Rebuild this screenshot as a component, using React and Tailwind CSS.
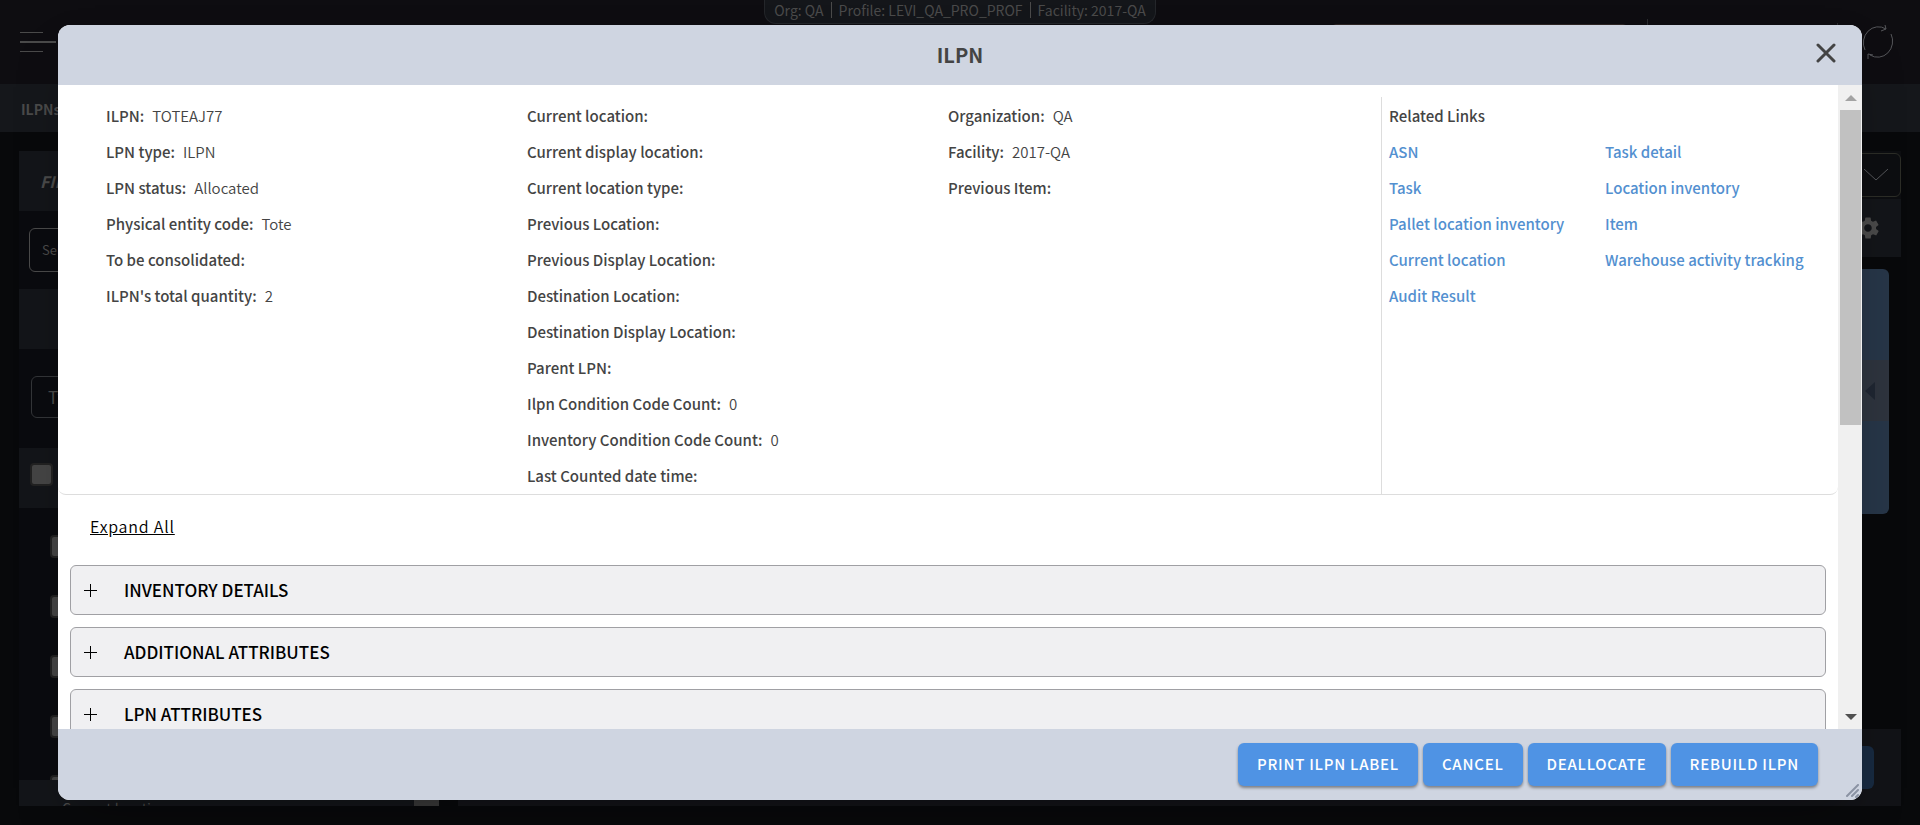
import React from "react";
import { IoMdSettings } from "react-icons/io";

const columns = [
  [
    ["ILPN:", "TOTEAJ77"],
    ["LPN type:", "ILPN"],
    ["LPN status:", "Allocated"],
    ["Physical entity code:", "Tote"],
    ["To be consolidated:", ""],
    ["ILPN's total quantity:", "2"],
  ],
  [
    ["Current location:", ""],
    ["Current display location:", ""],
    ["Current location type:", ""],
    ["Previous Location:", ""],
    ["Previous Display Location:", ""],
    ["Destination Location:", ""],
    ["Destination Display Location:", ""],
    ["Parent LPN:", ""],
    ["Ilpn Condition Code Count:", "0"],
    ["Inventory Condition Code Count:", "0"],
    ["Last Counted date time:", ""],
  ],
  [
    ["Organization:", "QA"],
    ["Facility:", "2017-QA"],
    ["Previous Item:", ""],
  ],
];

const links = [
  "ASN",
  "Task detail",
  "Task",
  "Location inventory",
  "Pallet location inventory",
  "Item",
  "Current location",
  "Warehouse activity tracking",
  "Audit Result",
];

const sections = ["INVENTORY DETAILS", "ADDITIONAL ATTRIBUTES", "LPN ATTRIBUTES"];
const actions = ["PRINT ILPN LABEL", "CANCEL", "DEALLOCATE", "REBUILD ILPN"];

function BackgroundPage() {
  return (
    <div className="flex h-full flex-col text-[#4a4a4a]">
      <header className="grid h-[84px] shrink-0 grid-cols-[1fr_auto_1fr] items-start bg-[#0e0d11]">
        <button aria-label="Menu" className="ml-5 mt-8 justify-self-start">
          <svg width="36" height="21" viewBox="0 0 36 21" stroke="#4a4a4a" fill="none">
            <path d="M0 .5H23M0 19.5H23" />
            <path d="M0 10H36" strokeWidth="2" />
          </svg>
        </button>
        <div className="flex h-6 items-center gap-[7px] rounded-b-xl border border-t-0 border-[#24262a] bg-[#14161a] px-[9px] pb-1 text-[14px] leading-5">
          <span>Org: QA</span>
          <span className="h-4 w-px bg-[#4a4a4a]" />
          <span>Profile: LEVI_QA_PRO_PROF</span>
          <span className="h-4 w-px bg-[#4a4a4a]" />
          <span>Facility: 2017-QA</span>
        </div>
        <div className="flex items-start justify-end pr-[26px]">
          <span className="mr-5 mt-6 h-9 w-[295px] rounded border border-[#2c2423]" />
          <span className="mr-[189px] mt-[19px] h-11 w-px bg-[#2a2b2e]" />
          <span className="mr-6 mt-[23px] h-9 w-px bg-[#2a2b2e]" />
          <button aria-label="Refresh" className="mt-6">
            <svg width="32" height="36" viewBox="0 0 32 36" stroke="#55565a" fill="none">
              <path d="M3 26A15 16 0 0 1 24 5M19 7l5-2-1-4M29 10A15 16 0 0 1 8 31M6 35v-5l5 1" />
            </svg>
          </button>
        </div>
      </header>
      <nav className="flex h-12 shrink-0 items-center bg-[#15171b] pb-px pl-[21px] pt-1 text-[14px] font-bold">ILPNs</nav>
      <main className="flex min-h-0 grow gap-[19px] bg-[#08090b] p-[19px]">
        <section className="flex w-[420px] flex-col overflow-hidden bg-[#0a0b0f]">
          <div className="flex h-[60px] shrink-0 items-center bg-[#131519] pl-[21px] text-[16px] font-bold italic">FILTERS</div>
          <div className="shrink-0 px-[10px] py-[17px]">
            <button className="block h-11 w-full rounded-md border border-[#4a4a4a] pl-3 text-left text-[13px]">Select</button>
          </div>
          <div className="h-[60px] shrink-0 bg-[#131519]" />
          <div className="shrink-0 px-3 pb-[30px] pt-[27px]">
            <button className="block h-[42px] w-full rounded-md border border-[#333538] pl-4 text-left text-[17px]">Type</button>
          </div>
          <label className="flex h-[60px] shrink-0 items-start bg-[#131519] pl-[11px] pt-[15px]">
            <input type="checkbox" aria-label="Select all" className="size-[23px] appearance-none rounded border-2 border-[#222] bg-[#454545]" />
          </label>
          <div className="flex h-[272px] shrink-0 flex-col gap-[37px] overflow-hidden pl-[31px] pt-[27px]">
            {[1, 2, 3, 4, 5].map((n) => (
              <input key={n} type="checkbox" aria-label={`Select row ${n}`} className="size-[23px] shrink-0 appearance-none rounded border-2 border-[#222] bg-[#454545]" />
            ))}
          </div>
          <div className="flex min-h-0 grow justify-between overflow-hidden bg-[#131519] pl-[43px] text-[14px] leading-5">
            <span className="pt-[18px]">Current location</span>
            <span className="w-[25px] bg-[#383838]" />
          </div>
        </section>
        <section className="flex min-w-0 grow flex-col">
          <div className="flex h-[48px] shrink-0 items-start bg-[#0d0e11] pt-[2px]">
            <button aria-label="Open list" className="flex h-11 w-full items-center justify-end rounded-md border border-[#2c2d27] pr-3">
              <svg width="24" height="12" viewBox="0 0 24 12" fill="none" stroke="#55565a">
                <path d="M0 0l12 11L24 0" />
              </svg>
            </button>
          </div>
          <div className="flex h-[58px] shrink-0 items-center justify-end bg-[#131519] pr-[20px]">
            <IoMdSettings size={26} color="#4a4a4a" />
          </div>
          <div className="mr-3 mt-3 h-[245px] shrink-0 overflow-hidden rounded-md bg-[#273648] pt-[91px]">
            <div className="flex h-[61px] items-center justify-end bg-[#2e343e] pr-[14px]">
              <svg width="10" height="18" viewBox="0 0 10 18" fill="#1f2632">
                <path d="M10 0v18L0 9z" />
              </svg>
            </div>
          </div>
          <div className="mt-auto flex h-[77px] items-start justify-end bg-[#121317] pr-[27px] pt-[17px]">
            <span className="h-[43px] w-24 rounded-md bg-[#182a41]" />
          </div>
        </section>
      </main>
    </div>
  );
}

function Details() {
  return (
    <section className="grid grid-cols-[1fr_1fr_1fr_469px] rounded-b-lg border-b border-[#dddddd] pl-12 pt-3 text-[15px] text-[#444444]">
      {columns.map((rows, i) => (
        <dl key={i} className="pt-px">
          {rows.map(([label, value]) => (
            <div key={label} className="flex h-9 items-center gap-2">
              <dt className="font-medium">{label}</dt>
              <dd className="font-[350]">{value}</dd>
            </div>
          ))}
        </dl>
      ))}
      <div className="ml-3 border-l border-[#dddddd] pl-[7px] pt-px font-medium">
        <h2 className="flex h-9 items-center">Related Links</h2>
        <div className="grid grid-cols-[216px_1fr]">
          {links.map((link) => (
            <a key={link} href="#" className="flex h-9 items-center text-[#5390d0]">
              {link}
            </a>
          ))}
        </div>
      </div>
    </section>
  );
}

export default function App() {
  return (
    <div className="relative h-screen overflow-hidden bg-[#08090b] font-['Noto_Sans_CJK_SC','Source_Sans_Pro',sans-serif]">
      <BackgroundPage />
      <div
        role="dialog"
        aria-label="ILPN"
        className="absolute inset-x-[58px] inset-y-[25px] flex flex-col overflow-hidden rounded-xl bg-white shadow-2xl"
      >
        <header className="grid h-[60px] shrink-0 grid-cols-[1fr_auto_1fr] items-center bg-[#cfd5e1] px-[26px] text-[#444444]">
          <h1 className="col-start-2 text-[20px] font-bold">ILPN</h1>
          <button aria-label="Close" className="mb-1 justify-self-end">
            <svg width="20" height="20" viewBox="0 0 20 20" stroke="#444444" strokeWidth="3" strokeLinecap="round">
              <path d="M2 2l16 16M18 2L2 18" />
            </svg>
          </button>
        </header>
        <div className="flex min-h-0 grow">
          <div className="min-w-0 grow overflow-hidden">
            <Details />
            <div className="px-8 pb-[27px] pt-[19px]">
              <button className="text-[16px] font-[350] leading-6 tracking-wider text-black underline">Expand All</button>
            </div>
            <div className="flex flex-col gap-3 px-3">
              {sections.map((title) => (
                <button
                  key={title}
                  className="flex h-[50px] shrink-0 items-center gap-[27px] rounded-md border border-[#a0a0a4] bg-[#f0f0f2] pl-[13px] text-left text-[17px] font-medium text-black"
                >
                  <svg width="13" height="13" viewBox="0 0 13 13" stroke="#000">
                    <path d="M0 6.5h13M6.5 0v13" />
                  </svg>
                  {title}
                </button>
              ))}
            </div>
          </div>
          <div className="flex w-6 shrink-0 flex-col items-center bg-[#f0f0f0] pb-[9px] pl-px pt-[10px]">
            <svg width="12" height="6" viewBox="0 0 12 6" fill="#a3a3a3">
              <path d="M6 0l6 6H0z" />
            </svg>
            <div className="mt-[9px] h-[315px] w-[21px] bg-[#c1c1c1]" />
            <svg className="mt-auto" width="12" height="6" viewBox="0 0 12 6" fill="#505050">
              <path d="M0 0h12L6 6z" />
            </svg>
          </div>
        </div>
        <footer className="relative flex h-[71px] shrink-0 items-start justify-end gap-[5px] bg-[#cfd5e1] pr-11 pt-[14px]">
          {actions.map((action) => (
            <button
              key={action}
              className="h-[43px] rounded-md bg-[#4f93e4] px-[19px] text-[15px] font-medium tracking-wider text-white shadow-[0_2px_3px_rgba(0,0,0,0.4)]"
            >
              {action}
            </button>
          ))}
          <svg className="absolute bottom-[2px] right-[2px]" width="14" height="14" viewBox="0 0 14 14" stroke="#8b93a3" strokeWidth="2" strokeLinecap="round">
            <path d="M1 12L12 1M6 12l6-6M10 13l2-2" />
          </svg>
        </footer>
      </div>
    </div>
  );
}
